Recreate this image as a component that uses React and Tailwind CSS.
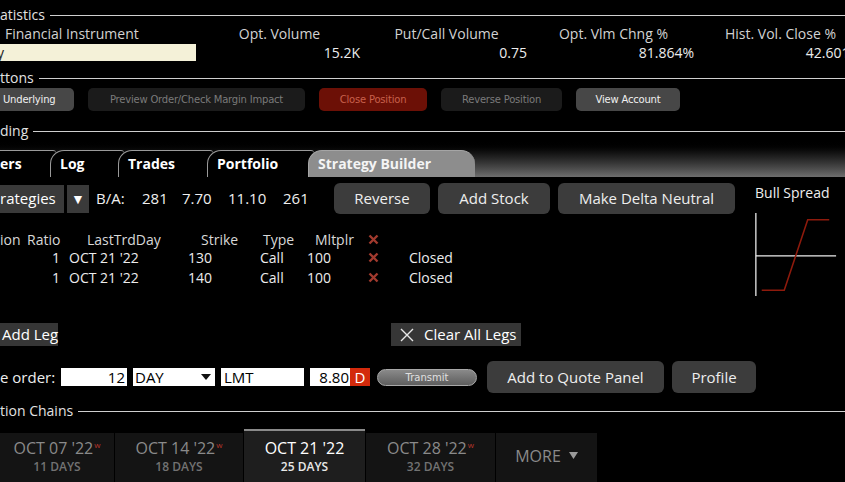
import React from "react";

const RedX = () => (
  <svg width="11" height="11" viewBox="0 0 11 11" className="block">
    <path d="M1.5 1.5L9.5 9.5M9.5 1.5L1.5 9.5" stroke="#a13a2e" strokeWidth="2.4" />
  </svg>
);

function Sec({ t, cls }) {
  return (
    <div className={"flex items-center h-[18px] " + cls}>
      <span className="text-[14px] leading-[18px] text-[#e2e2e2] whitespace-nowrap">{t}</span>
      <div className="flex-1 h-px bg-[#cfcfcf] ml-[5px]" />
    </div>
  );
}

export default function App() {
  return (
    <div className="w-[845px] h-[482px] overflow-hidden bg-black text-[#e8e8e8] font-['Open_Sans',sans-serif] flex flex-col">
      <Sec t="atistics" cls="mt-[6px]" />
      {/* headers */}
      <div className="flex h-[18px] mt-px text-[14px] leading-[18px] text-[#d2d2d2] whitespace-nowrap">
        <div className="w-[196px] shrink-0 pl-[5px]">Financial Instrument</div>
        <div className="w-[167px] shrink-0 text-center">Opt. Volume</div>
        <div className="w-[167px] shrink-0 text-center">Put/Call Volume</div>
        <div className="w-[167px] shrink-0 text-center">Opt. Vlm Chng %</div>
        <div className="w-[167px] shrink-0 text-center">Hist. Vol. Close %</div>
      </div>
      {/* values */}
      <div className="flex h-[18px] mt-px text-[14px] leading-[18px] text-[#ececec] whitespace-nowrap">
        <div className="w-[196px] shrink-0 h-[17px] bg-[#f4f1d8] text-[#222] leading-[17px] overflow-hidden">
          <span className="-ml-[3px]">y</span>
        </div>
        <div className="w-[166px] shrink-0 text-right pr-[2px]">15.2K</div>
        <div className="w-[167px] shrink-0 text-right pr-[2px]">0.75</div>
        <div className="w-[167px] shrink-0 text-right pr-[2px]">81.864%</div>
        <div className="w-[167px] shrink-0 text-right pr-[2px]">42.601%</div>
      </div>
      <Sec t="ttons" cls="mt-[7px]" />
      {/* buttons */}
      <div className="flex mt-px h-[23px] gap-[14px] font-['DejaVu_Sans',sans-serif] text-[10px] tracking-[-0.2px] whitespace-nowrap">
        <div className="w-[74px] shrink-0 rounded-r-[5px] bg-[#474747] text-[#f0f0f0] flex items-center pl-[3px]">Underlying</div>
        <div className="w-[217px] shrink-0 rounded-[5px] bg-[#1b1b1b] text-[#7a7a7a] flex items-center justify-center">Preview Order/Check Margin Impact</div>
        <div className="w-[108px] shrink-0 rounded-[5px] bg-[#6c1006] text-[#c8604c] flex items-center justify-center">Close Position</div>
        <div className="w-[121px] shrink-0 rounded-[5px] bg-[#1b1b1b] text-[#7a7a7a] flex items-center justify-center">Reverse Position</div>
        <div className="w-[104px] shrink-0 rounded-[5px] bg-[#474747] text-[#f0f0f0] flex items-center justify-center">View Account</div>
      </div>
      <Sec t="ding" cls="mt-[11px]" />
      {/* tab bar */}
      <div className="h-[37px] bg-gradient-to-b from-black to-[#6e6e6e] flex items-end text-[14px] font-bold whitespace-nowrap">
        <div className="w-[56px] h-[27px] shrink-0 bg-black border-t border-[#9a9a9a] rounded-tr-[3px] flex items-center pb-[2px] text-white">ers</div>
        <div className="w-[74px] h-[27px] shrink-0 -ml-[6px] bg-black border-t border-l border-[#9a9a9a] rounded-tl-[14px] rounded-tr-[3px] flex items-center pb-[2px] pl-[9px] text-white">Log</div>
        <div className="w-[95px] h-[27px] shrink-0 -ml-[6px] bg-black border-t border-l border-[#9a9a9a] rounded-tl-[14px] rounded-tr-[3px] flex items-center pb-[2px] pl-[9px] text-white">Trades</div>
        <div className="w-[107px] h-[27px] shrink-0 -ml-[6px] bg-black border-t border-l border-[#9a9a9a] rounded-tl-[14px] rounded-tr-[3px] flex items-center pb-[2px] pl-[9px] text-white">Portfolio</div>
        <div className="w-[167px] h-[27px] shrink-0 -ml-[6px] bg-[#8d8d8d] border-t border-l border-[#a5a5a5] rounded-tl-[14px] rounded-tr-[14px] flex items-center pb-[2px] pl-[9px] text-[#f4f4f4]">Strategy Builder</div>
      </div>
      {/* middle top */}
      <div className="flex h-[123px]">
        <div className="flex-1 flex flex-col">
          <div className="flex items-center mt-[6px] h-[31px] text-[15px] whitespace-nowrap">
            <div className="w-[64px] h-[28px] shrink-0 bg-[#3a3a3a] flex items-center text-white">rategies</div>
            <div className="w-[22px] h-[28px] shrink-0 ml-[3px] bg-[#3a3a3a] flex items-center justify-center text-white text-[14px]">▼</div>
            <div className="ml-[7px] flex text-[#efefef]">
              <span className="w-[46px]">B/A:</span>
              <span className="w-[40px]">281</span>
              <span className="w-[46px]">7.70</span>
              <span className="w-[55px]">11.10</span>
              <span>261</span>
            </div>
            <div className="ml-auto mr-[10px] flex gap-[8px]">
              <div className="w-[96px] h-[31px] rounded-[6px] bg-[#3c3c3c] flex items-center justify-center text-[#eee]">Reverse</div>
              <div className="w-[112px] h-[31px] rounded-[6px] bg-[#3c3c3c] flex items-center justify-center text-[#eee]">Add Stock</div>
              <div className="w-[177px] h-[31px] rounded-[6px] bg-[#3c3c3c] flex items-center justify-center text-[#eee]">Make Delta Neutral</div>
            </div>
          </div>
          {/* table header */}
          <div className="flex items-center mt-[16px] h-[18px] text-[14px] text-[#d8d8d8] whitespace-nowrap">
            <span className="w-[27px] shrink-0">ion</span>
            <span className="w-[60px] shrink-0">Ratio</span>
            <span className="w-[114px] shrink-0">LastTrdDay</span>
            <span className="w-[62px] shrink-0">Strike</span>
            <span className="w-[52px] shrink-0">Type</span>
            <span className="w-[53px] shrink-0">Mltplr</span>
            <RedX />
          </div>
          {[["130", "h-[19px]"], ["140", "h-[20px]"]].map(([k, h]) => (
            <div key={k} className={"flex items-center text-[14px] text-[#ececec] whitespace-nowrap " + h}>
              <span className="w-[52px] shrink-0" />
              <span className="w-[17px] shrink-0">1</span>
              <span className="w-[119px] shrink-0">OCT 21 '22</span>
              <span className="w-[72px] shrink-0">{k}</span>
              <span className="w-[47px] shrink-0">Call</span>
              <span className="w-[61px] shrink-0">100</span>
              <span className="w-[41px] shrink-0"><RedX /></span>
              <span>Closed</span>
            </div>
          ))}
        </div>
        <div className="w-[100px] shrink-0 flex flex-col">
          <div className="mt-[7px] h-[18px] pl-[10px] text-[14px] leading-[18px] text-[#eee] whitespace-nowrap">Bull Spread</div>
          <svg width="100" height="92" viewBox="0 0 100 92" className="mt-[8px] block">
            <line x1="10" y1="3" x2="10" y2="88" stroke="#eeeeee" strokeWidth="1.3" />
            <line x1="10" y1="47" x2="92" y2="47" stroke="#eeeeee" strokeWidth="1.3" />
            <polyline points="16,82 39,82 63,10 85,10" fill="none" stroke="#8e1a0c" strokeWidth="1.6" />
          </svg>
        </div>
      </div>
      {/* Add leg row */}
      <div className="flex mt-[23px] h-[23px] text-[15px] whitespace-nowrap">
        <div className="w-[58px] h-[23px] bg-[#363636] flex items-center pl-[2px] text-white">Add Leg</div>
        <div className="ml-[333px] w-[130px] h-[23px] bg-[#363636] flex items-center pl-[9px] gap-[10px] text-white">
          <svg width="14" height="14" viewBox="0 0 14 14" className="block">
            <path d="M1 1L13 13M13 1L1 13" stroke="#e8e8e8" strokeWidth="1.4" />
          </svg>
          <span>Clear All Legs</span>
        </div>
      </div>
      {/* order row */}
      <div className="flex items-center mt-[15px] h-[32px] text-[15px] whitespace-nowrap">
        <span className="w-[61px] shrink-0 text-[#eee]">e order:</span>
        <div className="w-[66px] h-[18px] shrink-0 bg-white text-black text-right pr-[2px] leading-[18px]">12</div>
        <div className="w-[82px] h-[18px] shrink-0 ml-[6px] bg-white text-black pl-[2px] leading-[18px] flex items-center justify-between pr-[4px]">
          <span>DAY</span>
          <svg width="10" height="6" viewBox="0 0 10 6" className="block"><path d="M0 0H10L5 6Z" fill="#111" /></svg>
        </div>
        <div className="w-[83px] h-[18px] shrink-0 ml-[6px] bg-white text-black pl-[3px] leading-[18px]">LMT</div>
        <div className="w-[40px] h-[18px] shrink-0 ml-[6px] bg-white text-black text-right pr-[1px] leading-[18px]">8.80</div>
        <div className="w-[20px] h-[18px] shrink-0 bg-[#d32a0c] text-white text-center leading-[18px]">D</div>
        <div className="w-[100px] h-[17px] shrink-0 ml-[7px] rounded-full border border-[#a8a8a8] bg-gradient-to-b from-[#8a8a8a] to-[#5e5e5e] flex items-center justify-center font-['DejaVu_Sans',sans-serif] text-[10px] text-[#e0e0e0]">Transmit</div>
        <div className="w-[177px] h-[32px] shrink-0 ml-[10px] rounded-[6px] bg-[#3c3c3c] flex items-center justify-center text-[#eee]">Add to Quote Panel</div>
        <div className="w-[84px] h-[32px] shrink-0 ml-[8px] rounded-[6px] bg-[#3c3c3c] flex items-center justify-center text-[#eee]">Profile</div>
      </div>
      <Sec t="tion Chains" cls="mt-[9px]" />
      {/* expiry tabs */}
      <div className="flex items-end mt-[9px] h-[53px] gap-[1px] whitespace-nowrap">
        {[
          ["OCT 07 '22", "11 DAYS", "w-[114px]", false],
          ["OCT 14 '22", "18 DAYS", "w-[128px]", false],
          ["OCT 21 '22", "25 DAYS", "w-[121px]", true],
          ["OCT 28 '22", "32 DAYS", "w-[129px]", false],
        ].map(([d, n, w, sel]) => (
          <div
            key={d}
            className={
              sel
                ? "shrink-0 h-[53px] bg-[#1e1e1e] border-t-2 border-[#8a8a8a] flex flex-col items-center pt-[6px] " + w
                : "shrink-0 h-[49px] bg-[#141414] flex flex-col items-center pt-[4px] " + w
            }
          >
            <div className={sel ? "text-[16px] leading-[22px] text-white" : "text-[16px] leading-[22px] text-[#8a8a8a]"}>
              {d}
              {!sel && <sup className="text-[8px] text-[#b8352a] ml-[1px] -top-[6px]">w</sup>}
            </div>
            <div className={sel ? "text-[12px] leading-[16px] font-semibold text-[#e8e8e8]" : "text-[12px] leading-[16px] font-semibold text-[#727272]"}>{n}</div>
          </div>
        ))}
        <div className="w-[101px] h-[49px] shrink-0 bg-[#141414] flex items-center justify-center gap-[8px] text-[16px] text-[#8a8a8a] pb-[4px]">
          <span>MORE</span>
          <svg width="9" height="7" viewBox="0 0 9 7" className="block"><path d="M0 0H9L4.5 7Z" fill="#9a9a9a" /></svg>
        </div>
      </div>
    </div>
  );
}
